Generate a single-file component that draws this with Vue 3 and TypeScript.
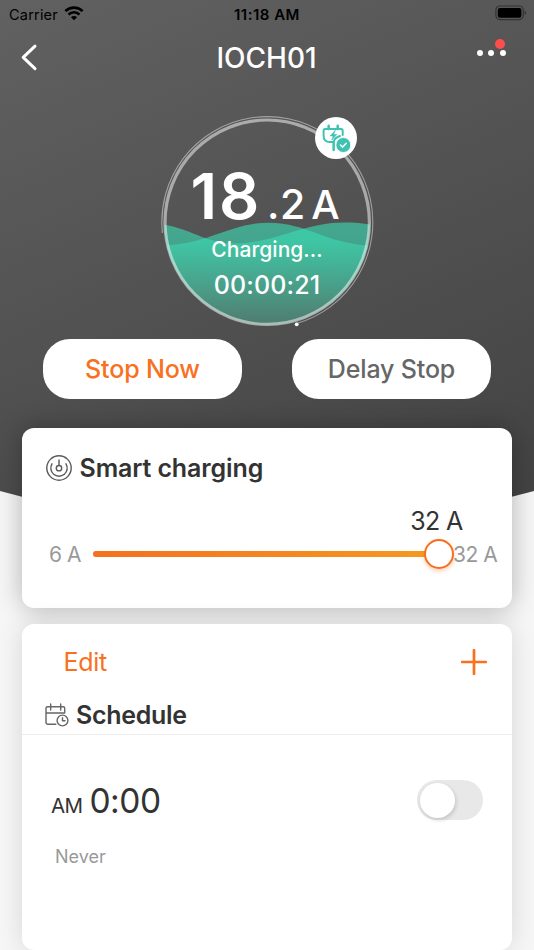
<script setup lang="ts">
import { ref, computed } from 'vue'

const device = 'IOCH01'
const current = ref({ whole: '18', fraction: '.2', unit: 'A' })
const status = 'Charging...'
const elapsed = '00:00:21'

const min = 6
const max = 32
const limit = ref(32)
const fill = computed(() => `${((limit.value - min) / (max - min)) * 100}%`)

const enabled = ref(false)
</script>

<template>
  <main class="screen">
    <div class="backdrop"></div>

    <div class="status-bar">
      <div class="carrier">
        <span class="carrier-name">Carrier</span>
        <svg class="wifi" width="20" height="15" viewBox="0 0 20 15">
          <path d="M1.4 5.1C6.2.5 13.8.5 18.6 5.1" fill="none" stroke="#000" stroke-width="2.7" />
          <path d="M4.5 8.5c3.1-2.9 7.9-2.9 11 0" fill="none" stroke="#000" stroke-width="2.5" />
          <path d="M10 14.3 6.9 11.2c1.7-1.6 4.5-1.6 6.2 0z" fill="#000" />
        </svg>
      </div>
      <span class="clock">11:18 AM</span>
      <svg class="battery" width="32" height="16" viewBox="0 0 32 16">
        <rect x="0.9" y="1" width="27.4" height="13.6" rx="4" fill="none" stroke="#333" stroke-width="1.2" />
        <rect x="2.8" y="2.9" width="23.6" height="9.8" rx="2.2" fill="#000" />
        <path d="M29.7 5.6c1.9.7 1.9 3.7 0 4.4z" fill="#333" />
      </svg>
    </div>

    <header class="nav">
      <button class="back" aria-label="Back">
        <svg width="18" height="28" viewBox="0 0 18 28">
          <path d="M15 2.2 3.2 13.4l11.8 11.3" fill="none" stroke="#fff" stroke-width="3" stroke-linecap="round" stroke-linejoin="round" />
        </svg>
      </button>
      <h1 class="title">{{ device }}</h1>
      <button class="more" aria-label="More">
        <i></i><i></i><i></i>
        <span class="badge"></span>
      </button>
    </header>

    <section class="gauge">
      <svg class="dial" width="220" height="220" viewBox="0 0 220 220">
        <defs>
          <linearGradient id="water" x1="0" y1="108" x2="0" y2="214" gradientUnits="userSpaceOnUse">
            <stop offset="0" stop-color="#3adcb4" stop-opacity="0.62" />
            <stop offset="0.2" stop-color="#3adcb4" stop-opacity="0.6" />
            <stop offset="1" stop-color="#4fbd9f" stop-opacity="0.22" />
          </linearGradient>
          <clipPath id="tank"><circle cx="110.2" cy="110.2" r="103" /></clipPath>
        </defs>
        <g clip-path="url(#tank)" fill="url(#water)">
          <path d="M5 112.500C30 115 50 131.500 76 131.500C118 131.500 146 110.500 188 110.500C198 110.500 206 111 215 113V220H5Z" />
          <path d="M5 133.500C50 133 74 110.700 112 110.700C150 110.700 172 133 215 133.500V220H5Z" />
        </g>
        <circle cx="110.2" cy="110.2" r="102.2" fill="none" stroke="#fff" stroke-opacity="0.5" stroke-width="3.2" />
        <path d="M5.400 121A105.500 105.500 0 1 1 139.700 211.500" fill="none" stroke="#fff" stroke-opacity="0.45" stroke-width="1.1" />
        <circle cx="139.7" cy="212.3" r="1.9" fill="#fff" />
      </svg>
      <div class="readout">
        <div class="amps">
          <span class="whole">{{ current.whole }}</span>
          <span class="fraction">{{ current.fraction }}</span>
          <span class="unit">{{ current.unit }}</span>
        </div>
        <div class="state">{{ status }}</div>
        <div class="elapsed">{{ elapsed }}</div>
      </div>
      <div class="plug">
        <svg width="42" height="42" viewBox="0 0 42 42" fill="none" stroke="#3fc3b1" stroke-width="2" stroke-linecap="round" stroke-linejoin="round">
          <path d="M13.7 8.7v3.2M22.7 8.7v3.2" stroke-width="2.5" />
          <path d="M27.7 18v-4.3q0-1.7-1.7-1.7H10.3q-1.7 0-1.7 1.7v5.1q0 6.3 6.3 6.3h3.6v8.2" />
          <path d="M18.8 33v-8q.2-4 6.2-6" />
          <path d="m20.2 13.4-5 5.5h3l-1.4 4.1 5-5.5h-3z" fill="#3fc3b1" stroke-width=".6" />
          <circle cx="28.4" cy="28" r="7.5" fill="#3fc3b1" stroke="#fff" stroke-width="0.8" />
          <path d="m25.5 28 2.1 2.1 3.7-3.8" stroke="#fff" stroke-width="1.5" />
        </svg>
      </div>
    </section>

    <div class="actions">
      <button class="pill stop">Stop Now</button>
      <button class="pill delay">Delay Stop</button>
    </div>

    <section class="card smart">
      <h2 class="heading">
        <svg width="26" height="26" viewBox="0 0 26 26" fill="none" stroke="#5a5a5a" stroke-width="1.4" stroke-linecap="round">
          <circle cx="13" cy="13" r="12.2" />
          <path d="M6 8.8a8.2 8.2 0 1 0 14 0" />
          <circle cx="13" cy="13.2" r="2.7" />
          <path d="M13 5v5.4" />
        </svg>
        <span>Smart charging</span>
      </h2>
      <div class="value">{{ limit }} A</div>
      <div class="slider">
        <span class="bound low">{{ min }} A</span>
        <div class="track">
          <div class="fill" :style="{ width: fill }"></div>
          <div class="thumb" :style="{ left: fill }"></div>
        </div>
        <span class="bound high">{{ max }} A</span>
      </div>
    </section>

    <section class="card schedule">
      <div class="tools">
        <button class="edit">Edit</button>
        <button class="add" aria-label="Add">
          <svg width="26" height="26" viewBox="0 0 26 26">
            <path d="M13 1.2v23.6M1.2 13h23.6" stroke="#f9701d" stroke-width="2.7" stroke-linecap="round" />
          </svg>
        </button>
      </div>
      <h2 class="heading">
        <svg width="24" height="24" viewBox="0 0 24 24" fill="none" stroke="#666" stroke-width="1.4" stroke-linecap="round" stroke-linejoin="round">
          <path d="M10.8 21.2H3q-2 0-2-2V5.3q0-1.5 1.5-1.5h15.7q1.5 0 1.5 1.5v4.4M1 10h18.7M5.7 1v6M15.7 1v6" />
          <circle cx="17.5" cy="17.5" r="5.4" />
          <path d="M17.5 14.7v3h2.5" />
        </svg>
        <span>Schedule</span>
      </h2>
      <div class="entry">
        <div class="time"><span class="period">AM</span><span class="hour">0:00</span></div>
        <button class="toggle" :class="{ on: enabled }" aria-label="Toggle schedule" @click="enabled = !enabled">
          <span class="knob"></span>
        </button>
      </div>
      <div class="repeat">Never</div>
    </section>
  </main>
</template>

<style>
body {
  background: #f5f5f5;
}
</style>

<style scoped>
.screen {
  position: relative;
  width: 534px;
  height: 950px;
  box-sizing: border-box;
  overflow: hidden;
  display: flex;
  flex-direction: column;
  background: #f6f6f6;
  font-family: Inter, 'Liberation Sans', sans-serif;
  color: #333;
  white-space: nowrap;
}
.screen > * {
  flex: none;
}
button {
  padding: 0;
  border: 0;
  background: none;
  font-family: inherit;
}
.backdrop {
  position: absolute;
  inset: 0 0 auto;
  height: 561px;
  background: linear-gradient(157deg, #616161 0%, #404040 100%);
  clip-path: polygon(0 0, 100% 0, 100% 491px, 50% 561px, 0 491px);
}

.status-bar {
  position: relative;
  height: 28px;
  padding: 0 9px;
  display: grid;
  grid-template-columns: 1fr auto 1fr;
  align-items: center;
  color: #000;
}
.carrier {
  display: flex;
  align-items: center;
  gap: 6px;
}
.carrier-name {
  font-size: 14.5px;
  letter-spacing: 0.2px;
}
.clock {
  font-size: 15px;
  font-weight: 600;
  letter-spacing: 0.5px;
}
.wifi {
  margin-top: -2px;
}
.battery {
  justify-self: end;
  margin: -2px -2px 0 0;
}

.nav {
  position: relative;
  height: 60px;
  padding: 0 21px 0 20px;
  display: grid;
  grid-template-columns: 1fr auto 1fr;
  align-items: center;
}
.back {
  justify-self: start;
  width: 18px;
  height: 28px;
}
.title {
  margin: 0;
  font-size: 28px;
  font-weight: 500;
  line-height: 34px;
  color: #fff;
}
.more {
  position: relative;
  justify-self: end;
  display: flex;
  gap: 5.5px;
  margin: -10px 7.5px 0 0;
}
.more i {
  width: 6px;
  height: 6px;
  border-radius: 50%;
  background: #fff;
}
.badge {
  position: absolute;
  right: 0.5px;
  top: -11.5px;
  width: 10px;
  height: 10px;
  border-radius: 50%;
  background: #ff4d4f;
}

.gauge {
  position: relative;
  align-self: center;
  width: 220px;
  height: 220px;
  margin-top: 24px;
}
.dial {
  position: absolute;
  inset: 0;
}
.readout {
  position: relative;
  display: flex;
  flex-direction: column;
  align-items: center;
  padding-top: 46px;
  color: #fff;
  font-weight: 500;
}
.amps {
  display: flex;
  align-items: baseline;
  height: 78px;
  line-height: 77px;
  margin-left: -4px;
}
.whole {
  font-size: 63px;
  font-weight: 600;
  letter-spacing: 2px;
}
.fraction {
  margin-left: 5.5px;
  font-size: 41px;
  letter-spacing: 0.5px;
}
.unit {
  margin-left: 5.5px;
  font-size: 40px;
}
.state {
  height: 28px;
  line-height: 28px;
  font-size: 21px;
  letter-spacing: 0.05px;
}
.elapsed {
  margin-top: 6px;
  height: 30px;
  line-height: 30px;
  font-size: 25px;
  letter-spacing: 0.15px;
}
.plug {
  position: absolute;
  left: 158px;
  top: 5px;
  width: 42px;
  height: 42px;
  border-radius: 50%;
  background: #fff;
}

.actions {
  position: relative;
  display: flex;
  justify-content: space-between;
  margin-top: 7px;
  padding: 0 43px;
}
.pill {
  width: 199px;
  height: 60px;
  border-radius: 27px;
  background: #fff;
  font-size: 25px;
  font-weight: 500;
  letter-spacing: -0.15px;
}
.stop {
  color: #f9701d;
}
.delay {
  color: #666;
}

.card {
  position: relative;
  margin: 0 22px;
  border-radius: 12px;
  background: #fff;
}
.heading {
  display: flex;
  align-items: center;
  margin: 0;
  font-size: 25px;
  font-weight: 600;
  line-height: 30px;
}
.smart {
  height: 180.5px;
  margin-top: 28.5px;
  box-sizing: border-box;
  padding-top: 25.5px;
  box-shadow: 0 0 26px rgba(0, 0, 0, 0.28);
}
.smart .heading {
  padding-left: 23.5px;
  gap: 8px;
  letter-spacing: -0.12px;
}
.value {
  margin: 22.5px 49.5px 0 0;
  text-align: right;
  font-size: 25px;
  line-height: 30px;
  letter-spacing: -0.7px;
}
.slider {
  display: flex;
  align-items: center;
  height: 30px;
  margin-top: 3px;
  padding: 0 15px 0 27px;
  font-size: 21px;
  letter-spacing: -0.5px;
  color: #999;
}
.bound {
  padding-top: 1px;
}
.low {
  width: 44px;
}
.track {
  position: relative;
  flex: 1;
  height: 6px;
  border-radius: 3px;
  background: #eee;
}
.fill {
  height: 100%;
  border-radius: 3px;
  background: linear-gradient(90deg, #f4701f, #f59a20);
}
.thumb {
  position: absolute;
  top: 50%;
  width: 30px;
  height: 30px;
  box-sizing: border-box;
  margin: -15px 0 0 -15px;
  border: 2px solid #f4701f;
  border-radius: 50%;
  background: #fff;
  box-shadow: 0 2px 4px rgba(244, 112, 31, 0.35);
}
.high {
  width: 44px;
  margin-left: 14px;
  text-align: right;
}

.schedule {
  height: 326px;
  margin-top: 16px;
  box-shadow: 0 0 26px rgba(0, 0, 0, 0.13);
}
.tools {
  display: flex;
  align-items: center;
  justify-content: space-between;
  height: 76px;
  padding: 0 25px 0 41.5px;
}
.edit {
  font-size: 25px;
  line-height: 30px;
  letter-spacing: -0.3px;
  color: #f9701d;
}
.add {
  width: 26px;
  height: 26px;
}
.schedule .heading {
  height: 30px;
  padding: 0 0 3.5px 23px;
  gap: 7px;
  border-bottom: 1.5px solid #eee;
  letter-spacing: -0.3px;
}
.entry {
  display: flex;
  align-items: center;
  justify-content: space-between;
  margin-top: 45.5px;
  height: 40px;
  padding: 0 29px;
}
.time {
  display: flex;
  align-items: baseline;
  gap: 7px;
  padding-top: 1px;
}
.period {
  font-size: 20.5px;
  letter-spacing: -0.6px;
}
.hour {
  font-size: 33.5px;
  line-height: 40px;
  letter-spacing: -0.5px;
}
.toggle {
  width: 66px;
  height: 40px;
  padding: 2.5px;
  border-radius: 20px;
  background: #e8e8e8;
}
.toggle.on {
  background: #f9701d;
}
.knob {
  display: block;
  width: 35px;
  height: 35px;
  border-radius: 50%;
  background: #fff;
  box-shadow: 1px 2px 4px rgba(0, 0, 0, 0.16);
}
.toggle.on .knob {
  margin-left: auto;
}
.repeat {
  margin: 25.5px 0 0 33px;
  font-size: 18px;
  line-height: 22px;
  color: #999;
}
</style>
